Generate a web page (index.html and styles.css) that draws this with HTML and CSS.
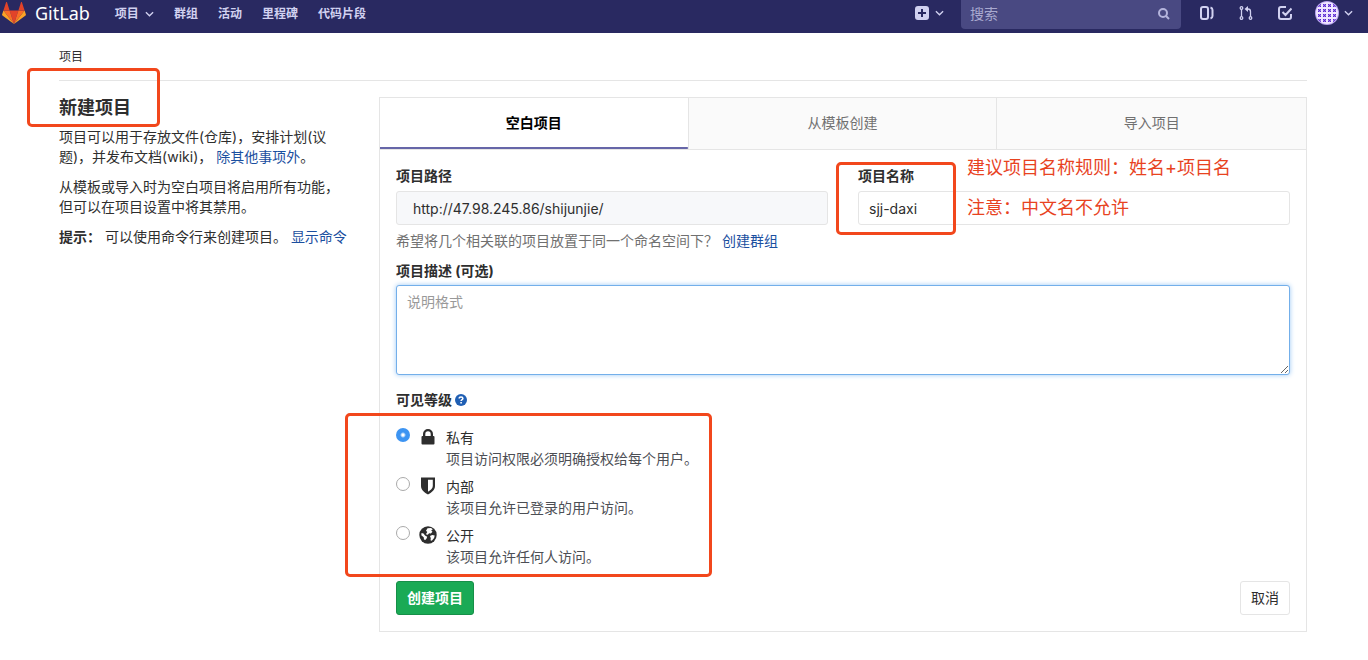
FILE: index.html
```html
<!DOCTYPE html>
<html lang="zh-CN">
<head>
<meta charset="utf-8">
<title>新建项目 · GitLab</title>
<link rel="stylesheet" href="styles.css">
</head>
<body>
<header class="navbar">
  <a class="brand" href="#">
    <svg class="brand-logo" viewBox="0 0 24 22" aria-hidden="true">
      <path fill="#e24329" d="M12 22 16.4 8.4H7.6z"/>
      <path fill="#fc6d26" d="M12 22 7.6 8.4H1.4z"/>
      <path fill="#fca326" d="M1.4 8.4.1 12.5a.9.9 0 0 0 .3 1L12 22z"/>
      <path fill="#e24329" d="M1.4 8.4h6.2L5 .3c-.1-.4-.8-.4-.9 0z"/>
      <path fill="#fc6d26" d="M12 22 16.4 8.4h6.2z"/>
      <path fill="#fca326" d="M22.6 8.4l1.3 4.1a.9.9 0 0 1-.3 1L12 22z"/>
      <path fill="#e24329" d="M22.6 8.4h-6.2L19 .3c.1-.4.8-.4.9 0z"/>
    </svg>
    <span class="brand-name">GitLab</span>
  </a>
  <nav class="nav-links">
    <a href="#">项目 <svg class="chevron" viewBox="0 0 10 6" aria-hidden="true"><path d="M1 1l4 4 4-4"/></svg></a>
    <a href="#">群组</a>
    <a href="#">活动</a>
    <a href="#">里程碑</a>
    <a href="#">代码片段</a>
  </nav>
  <div class="nav-tools">
    <button class="tool tool-new" type="button" aria-label="新建">
      <svg class="icon-14" viewBox="0 0 14 14" aria-hidden="true"><path fill="#d1d1f0" fill-rule="evenodd" d="M3 0h8a3 3 0 0 1 3 3v8a3 3 0 0 1-3 3H3a3 3 0 0 1-3-3V3a3 3 0 0 1 3-3zm3 3v3H3v2h3v3h2V8h3V6H8V3z"/></svg>
      <svg class="chevron" viewBox="0 0 10 6" aria-hidden="true"><path d="M1 1l4 4 4-4"/></svg>
    </button>
    <form class="search">
      <input type="search" placeholder="搜索" aria-label="搜索">
      <svg class="search-icon" viewBox="0 0 12 12" aria-hidden="true"><circle cx="5" cy="5" r="4"/><path d="M8 8l3 3"/></svg>
    </form>
    <a class="tool tool-issues" href="#" aria-label="议题">
      <svg class="icon-14 line" viewBox="0 0 14 14" aria-hidden="true"><rect x="1" y="1" width="7" height="12" rx="2"/><path d="M10.500 1.500c1.500.5 2 1.200 2 2.500v6c0 1.300-.5 2-2 2.500"/></svg>
    </a>
    <a class="tool tool-merge" href="#" aria-label="合并请求">
      <svg class="icon-14 line thin" viewBox="0 0 14 14" aria-hidden="true"><circle cx="2.500" cy="2" r="1.300"/><circle cx="2.500" cy="12" r="1.300"/><circle cx="11.500" cy="12" r="1.300"/><path d="M2.500 3.500v7M11.500 10.500V5.500a2.500 2.500 0 0 0-2.500-2.500H8"/><path fill="#d1d1f0" stroke="none" d="M9 0v6L5.500 3z"/></svg>
    </a>
    <a class="tool tool-todo" href="#" aria-label="待办事项">
      <svg class="icon-14 line" viewBox="0 0 14 14" aria-hidden="true"><path d="M8 1H3a2 2 0 0 0-2 2v8a2 2 0 0 0 2 2h8a2 2 0 0 0 2-2V8M4.500 6l3 3L13.500 2.500"/></svg>
    </a>
    <button class="tool tool-user" type="button" aria-label="用户菜单">
      <svg class="avatar" viewBox="0 0 24 24" aria-hidden="true">
        <defs>
          <clipPath id="disc"><circle cx="12" cy="12" r="11"/></clipPath>
          <pattern id="weave" x="2" y="2" width="5" height="5" patternUnits="userSpaceOnUse"><path fill="#5a2bd0" d="M1 1h1v1H1zM3 1h1v1H3zM2 2h1v1H2zM1 3h1v1H1zM3 3h1v1H3z"/><path fill="#9b7be6" d="M2 1h1v1H2zM1 2h1v1H1zM3 2h1v1H3zM2 3h1v1H2z"/></pattern>
        </defs>
        <circle cx="12" cy="12" r="12" fill="#b7a4ee"/>
        <g clip-path="url(#disc)"><path fill="#efe6ff" d="M0 0h24v24H0z"/><path fill="url(#weave)" d="M0 0h24v24H0z"/></g>
      </svg>
      <svg class="chevron" viewBox="0 0 10 6" aria-hidden="true"><path d="M1 1l4 4 4-4"/></svg>
    </button>
  </div>
</header>

<div class="container">
  <nav class="breadcrumb" aria-label="面包屑"><a href="#">项目</a></nav>
  <main class="layout">
    <section class="intro">
      <h1 class="intro-title">新建项目<span class="mark mark-title"></span></h1>
      <p>项目可以用于存放文件(仓库)，安排计划(议题)，并发布文档(wiki)， <a href="#">除其他事项外</a>。</p>
      <p>从模板或导入时为空白项目将启用所有功能，但可以在项目设置中将其禁用。</p>
      <p><strong>提示：</strong> 可以使用命令行来创建项目。 <a href="#">显示命令</a></p>
    </section>

    <section class="panel">
      <div class="tabs" role="tablist">
        <button class="tab active" type="button" role="tab" aria-selected="true">空白项目</button>
        <button class="tab" type="button" role="tab" aria-selected="false">从模板创建</button>
        <button class="tab" type="button" role="tab" aria-selected="false">导入项目</button>
      </div>
      <form class="project-form">
        <div class="field-row">
          <div class="field">
            <label for="path">项目路径</label>
            <input class="control path" id="path" type="text" value="http://47.98.245.86/shijunjie/" readonly>
          </div>
          <div class="field">
            <label for="name">项目名称</label>
            <input class="control" id="name" type="text" value="sjj-daxi">
            <span class="mark mark-name"></span>
            <div class="notes">
              <p>建议项目名称规则：姓名+项目名</p>
              <p>注意：中文名不允许</p>
            </div>
          </div>
        </div>
        <p class="hint">希望将几个相关联的项目放置于同一个命名空间下？ <a href="#">创建群组</a></p>
        <div class="field field-description">
          <label for="description">项目描述 (可选)</label>
          <textarea class="control description" id="description" placeholder="说明格式"></textarea>
        </div>
        <div class="visibility" role="radiogroup" aria-labelledby="visibility-label">
          <div class="visibility-head">
            <span id="visibility-label">可见等级</span>
            <a href="#" aria-label="帮助"><svg class="help" viewBox="0 0 12 12" aria-hidden="true"><circle cx="6" cy="6" r="6" fill="#1f5fb4"/><path d="M4.200 4.600C4.200 2.400 7.900 2.500 7.900 4.500 7.900 5.700 6.100 5.700 6.100 7" fill="none" stroke="#fff" stroke-width="1.500"/><path fill="#fff" d="M5.300 8h1.600v1.500H5.300z"/></svg></a>
          </div>
          <div class="option">
            <input type="radio" name="visibility" id="private" checked>
            <svg class="option-icon" viewBox="0 0 18 18" aria-hidden="true"><path fill="#2e2e2e" fill-rule="evenodd" d="M4 8V6a5 5 0 0 1 10 0v2h.5a1 1 0 0 1 1 1v6.500a1 1 0 0 1-1 1h-11a1 1 0 0 1-1-1V9a1 1 0 0 1 1-1zm2.300 0h5.400V6a2.700 2.700 0 0 0-5.400 0z"/></svg>
            <label for="private"><span class="option-name">私有</span><span class="option-text">项目访问权限必须明确授权给每个用户。</span></label>
          </div>
          <div class="option">
            <input type="radio" name="visibility" id="internal">
            <svg class="option-icon" viewBox="0 0 18 18" aria-hidden="true"><path fill="#2e2e2e" fill-rule="evenodd" d="M2 .5h14V9c0 4-3.500 6.500-7 8.500C5.500 15.500 2 13 2 9zm7 2.200v12c2.500-1.500 4.800-3.200 4.800-5.700V2.700z"/></svg>
            <label for="internal"><span class="option-name">内部</span><span class="option-text">该项目允许已登录的用户访问。</span></label>
          </div>
          <div class="option">
            <input type="radio" name="visibility" id="public">
            <svg class="option-icon" viewBox="0 0 18 18" aria-hidden="true"><circle cx="9" cy="9" r="8.700" fill="#2e2e2e"/><path fill="#fff" d="M8.500 2.200 12 2l1.800 1.300-1.600 1.200 1.300 1.300-1.700 1.700-1.700-.3-1.300 1.600-1.900-.5L8.300 6 7 4.800zM2.500 7l2 .6L6 9.500l2.200 1.200-.6 1.800L6.300 14 5 13.500l-.3-2.300-2.400-2zM11 10l2.200-1 2.500.5-.6 2.500-2.300 2.700-1.300-.5.3-2z"/></svg>
            <label for="public"><span class="option-name">公开</span><span class="option-text">该项目允许任何人访问。</span></label>
          </div>
          <span class="mark mark-visibility"></span>
        </div>
        <div class="actions">
          <button class="btn btn-create" type="submit">创建项目</button>
          <button class="btn" type="button">取消</button>
        </div>
      </form>
    </section>
  </main>
</div>
</body>
</html>
```

FILE: styles.css
```css
* { box-sizing: border-box; }

body {
  margin: 0;
  background: #fff;
  color: #2e2e2e;
  font-family: Inter, "Noto Sans CJK SC", sans-serif;
  font-size: 14px;
  line-height: 20px;
}

h1, p { margin: 0; }
a { color: #1b4f9f; text-decoration: none; }
button, input, textarea { font: inherit; color: inherit; }
button { cursor: pointer; }
svg { display: block; flex: none; }

/* Top bar */
.navbar {
  display: flex;
  align-items: flex-start;
  justify-content: space-between;
  height: 33px;
  padding: 0 15px 0 2px;
  background: #292961;
}

.brand {
  display: flex;
  align-items: center;
  gap: 9px;
  height: 26px;
  color: #fff;
}
.brand-logo { width: 24px; height: 22px; }
.brand-name { font-family: "Noto Sans", sans-serif; font-size: 18px; line-height: 26px; }

.nav-links {
  display: flex;
  gap: 20px;
  margin-left: 25px;
  margin-right: auto;
}
.nav-links a {
  display: flex;
  align-items: center;
  gap: 6px;
  height: 27px;
  color: #d1d1f0;
  font-size: 12px;
  font-weight: 700;
}

.chevron {
  width: 9px;
  height: 6px;
  fill: none;
  stroke: #d1d1f0;
  stroke-width: 1.5;
}
.nav-tools { display: flex; }
.tool {
  display: flex;
  align-items: center;
  gap: 6px;
  height: 26px;
  padding: 0;
  border: 0;
  background: none;
}
.tool-new { margin-right: 17px; }
.tool-issues { margin-left: 19px; }
.tool-merge, .tool-todo { margin-left: 25px; }
.tool-user { margin-left: 23px; gap: 5px; }
.icon-14 { width: 14px; height: 14px; }
.line { fill: none; stroke: #d1d1f0; stroke-width: 2; }
.thin { stroke-width: 1.3; }
.avatar { width: 24px; height: 24px; }

.search {
  display: flex;
  align-items: center;
  width: 220px;
  height: 29px;
  padding: 0 11px 2px 9px;
  border-radius: 0 0 4px 4px;
  background: #494982;
}
.search input {
  flex: 1;
  min-width: 0;
  padding: 0;
  border: 0;
  outline: 0;
  background: none;
  color: #d1d1f0;
}
.search input::placeholder { color: #a9a9d0; opacity: 1; }
.search-icon { width: 12px; height: 12px; fill: none; stroke: #b4b4dc; stroke-width: 2; }

/* Page */
.container { padding: 0 61px 0 59px; }
.breadcrumb {
  display: flex;
  align-items: center;
  height: 48px;
  border-bottom: 1px solid #e5e5e5;
  font-size: 12px;
}
.breadcrumb a { color: #2e2e2e; }

.layout {
  display: grid;
  grid-template-columns: 290px minmax(0, 1fr);
  gap: 30px;
  padding: 16px 0 28px;
}
.intro p { margin-bottom: 10px; }
.intro-title {
  position: relative;
  margin-bottom: 8px;
  font-size: 18px;
  font-weight: 700;
  line-height: 22px;
}

/* Form panel */
.panel { border: 1px solid #e5e5e5; }
.tabs {
  display: grid;
  grid-template-columns: repeat(3, 1fr);
  border-bottom: 1px solid #e5e5e5;
}
.tab {
  height: 51px;
  padding: 0 0 2px;
  border: 0;
  border-right: 1px solid #e5e5e5;
  background: #fafafa;
  color: #707070;
}
.tab:last-child { border-right: 0; }
.tab.active {
  background: linear-gradient(#6666a8, #6666a8) bottom / 100% 2px no-repeat #fff;
  color: #000;
  font-weight: 700;
}

.project-form { padding: 16px; }
.field-row {
  display: grid;
  grid-template-columns: 1fr 1fr;
  gap: 30px;
}
.field { position: relative; }
.field label, .visibility-head { font-weight: 700; }
.field label { display: block; margin-bottom: 5px; line-height: 20px; }
.control {
  display: block;
  width: 100%;
  height: 34px;
  padding: 6px 10px;
  border: 1px solid #e5e5e5;
  border-radius: 3px;
  outline: 0;
  background: #fff;
}
.path { padding: 6px 16px; background: #f7f8fa; }
.hint { margin: 6px 0 10px; color: #707070; }
.field-description label { margin-bottom: 4px; }
.description {
  height: 90px;
  border-color: #73afea;
  box-shadow: 0 0 5px #9cc8f5;
  resize: vertical;
}
.description::placeholder { color: #999; opacity: 1; }

.visibility { position: relative; margin-top: 15px; }
.visibility-head { display: flex; align-items: center; gap: 3px; margin-bottom: 18px; }
.help { width: 12px; height: 12px; }
.option {
  display: grid;
  grid-template-columns: 14px 18px 1fr;
  align-items: start;
  column-gap: 9px;
  margin-bottom: 8px;
}
.option input {
  width: 14px;
  height: 14px;
  margin: 0;
  border: 1px solid #aaa;
  border-radius: 50%;
  appearance: none;
  background: #fff;
}
.option input:checked {
  border: 0;
  background: radial-gradient(circle, #fff 1px, #3d94f2 3px);
}
.option-icon { width: 18px; height: 18px; }
.option label { display: grid; gap: 1px; }
.option-text { color: #4c4e54; }

.actions { display: flex; justify-content: space-between; margin-top: 14px; }
.btn {
  height: 34px;
  padding: 0 10px;
  border: 1px solid #e5e5e5;
  border-radius: 3px;
  background: #fff;
}
.btn-create {
  border-color: #168f48;
  background: #1aaa55;
  color: #fff;
  font-weight: 700;
}

/* Hand-drawn annotations over the form */
.mark {
  position: absolute;
  border: 3px solid #f2471c;
  border-radius: 5px;
  pointer-events: none;
}
.mark-title { top: -29px; left: -32px; width: 133px; height: 59px; }
.mark-name { top: -4px; left: -22px; width: 120px; height: 73px; }
.mark-visibility { top: 23px; left: -51px; width: 367px; height: 164px; }
.notes {
  position: absolute;
  top: -18px;
  left: 109px;
  color: #e8431f;
  font-size: 18px;
  line-height: 40px;
  white-space: nowrap;
  pointer-events: none;
}
```
